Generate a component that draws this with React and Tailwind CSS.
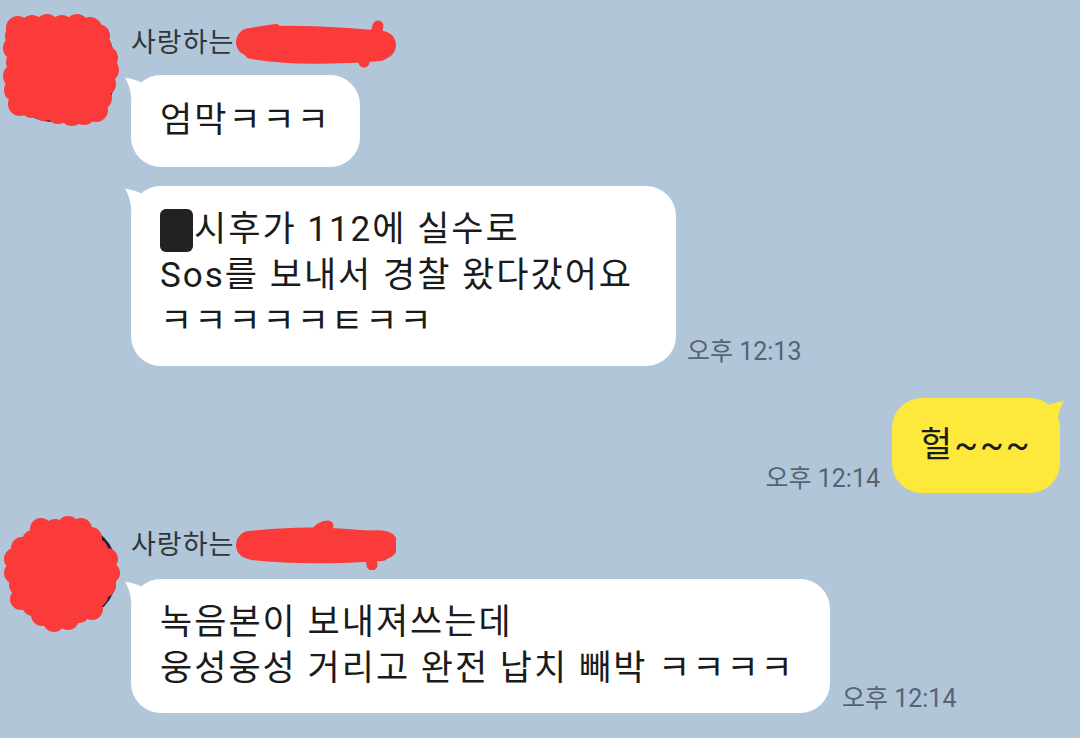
import React from "react";

const FONT = { fontFamily: "Roboto, 'Noto Sans CJK KR', 'Noto Sans', sans-serif" };

function Blob({ pts, r }) {
  const d = "M" + pts.map((p) => p.join(" ")).join(" L ") + " Z";
  return (
    <g fill="#fa3b3a">
      <path d={d} />
      {pts.map((p, i) => (
        <circle key={i} cx={p[0]} cy={p[1]} r={r} />
      ))}
    </g>
  );
}

function Avatar1() {
  const pts = [
    [16, 16], [30, 15], [45, 14], [60, 15], [75, 14], [88, 17], [96, 24], [98, 36], [104, 46],
    [105, 58], [102, 72], [98, 86], [94, 98], [82, 101], [70, 102], [56, 100], [42, 97],
    [30, 94], [18, 92], [14, 78], [13, 64], [16, 50], [13, 36], [15, 24],
  ];
  return (
    <svg width="120" height="120" viewBox="0 0 120 120" className="block">
      <rect x="10" y="6" width="102" height="104" rx="40" fill="#1c2230" />
      <path d="M100 70 Q108 80 104 96 L92 104 Z" fill="#c9cfd6" />
      <path d="M40 104 Q60 112 80 108 L70 100 Z" fill="#8a8f99" />
      <Blob pts={pts} r={12} />
    </svg>
  );
}

function Avatar2() {
  const pts = [];
  const n = 22;
  for (let i = 0; i < n; i++) {
    const a = (i / n) * Math.PI * 2;
    const rr = 45 + (i % 3 === 0 ? 3 : i % 2 === 0 ? -2 : 1);
    pts.push([Math.round(59 + Math.cos(a) * rr), Math.round(61 + Math.sin(a) * rr)]);
  }
  return (
    <svg width="120" height="120" viewBox="0 0 120 120" className="block">
      <rect x="24" y="14" width="90" height="92" rx="40" fill="#1c2230" />
      <Blob pts={pts} r={11} />
    </svg>
  );
}

function NameScribble({ variant }) {
  return (
    <svg width="160" height="50" viewBox="0 0 160 50" className="block -my-[7px] ml-[2px]">
      <g stroke="#fa3b3a" strokeLinecap="round" strokeLinejoin="round" fill="none">
        {variant === 1 ? (
          <>
            <path d="M14 24 C 40 20, 80 22, 110 24 S 140 26, 146 27" strokeWidth="28" />
            <path d="M16 32 C 50 38, 100 38, 144 34" strokeWidth="18" />
            <path d="M138 22 L 142 8" strokeWidth="11" />
            <path d="M124 32 L 128 44" strokeWidth="11" />
            <path d="M20 14 L 40 11" strokeWidth="10" />
          </>
        ) : (
          <>
            <path d="M14 25 C 40 22, 80 20, 110 23 S 140 23, 148 25" strokeWidth="28" />
            <path d="M16 32 C 50 36, 100 36, 146 33" strokeWidth="16" />
            <path d="M78 16 C 82 9, 86 6, 92 6" strokeWidth="11" />
            <path d="M134 30 L 136 45" strokeWidth="11" />
          </>
        )}
      </g>
    </svg>
  );
}

function LeftTail() {
  return (
    <svg width="22" height="32" viewBox="0 0 22 32" className="absolute -left-[7px] top-0">
      <path d="M1 2.5 C 7 3.5, 13 5, 21 9 L 21 32 L 8 32 C 7.5 18, 5 9, 1 2.5 Z" fill="#ffffff" />
    </svg>
  );
}

function RightTail() {
  return (
    <svg width="22" height="32" viewBox="0 0 22 32" className="absolute -right-[5px] top-0">
      <path d="M21 3 C 15 4, 9 5, 1 9 L 1 32 L 14 32 C 14.5 18, 17 9, 21 3 Z" fill="#fde93c" />
    </svg>
  );
}

function Time({ children }) {
  return (
    <div className="text-[25px] leading-[26px] text-[#566372] whitespace-nowrap mb-[1px]" style={FONT}>
      {children}
    </div>
  );
}

function LeftBubble({ children, w, py = "py-[21px]" }) {
  return (
    <div className={`relative bg-white rounded-[30px] ${py} pl-[29px] pr-[20px] ${w}`}>
      <LeftTail />
      <div className="relative text-[35px] leading-[46px] tracking-[2px] text-[#1b1b1b] whitespace-nowrap" style={FONT}>
        {children}
      </div>
    </div>
  );
}

function Name({ variant }) {
  return (
    <div className="flex items-center h-[36px]">
      <span className="text-[27px] leading-[36px] tracking-[1px] text-[#30353b] whitespace-nowrap" style={FONT}>
        사랑하는
      </span>
      <NameScribble variant={variant} />
    </div>
  );
}

export default function App() {
  return (
    <div className="w-[1080px] h-[738px] bg-[#b2c6d9] overflow-hidden flex flex-col">
      {/* group 1 */}
      <div className="flex pl-[2px] pt-[12px]">
        <div className="w-[120px] h-[120px] shrink-0">
          <Avatar1 />
        </div>
        <div className="ml-[9px] flex flex-col">
          <div className="mt-[13px]">
            <Name variant={1} />
          </div>
          <div className="mt-[14px]">
            <LeftBubble w="w-[229px]" py="py-[23px]">엄막ㅋㅋㅋ</LeftBubble>
          </div>
          <div className="mt-[19px] flex items-end gap-[11px]">
            <LeftBubble w="w-[545px]">
              <div className="flex items-center h-[46px]">
                <span className="inline-block w-[33px] h-[43px] bg-[#222] rounded-[6px] mr-[1px]" />
                <span>시후가 112에 실수로</span>
              </div>
              <div>Sos를 보내서 경찰 왔다갔어요</div>
              <div>ㅋㅋㅋㅋㅋㅌㅋㅋ</div>
            </LeftBubble>
            <Time>오후 12:13</Time>
          </div>
        </div>
      </div>

      {/* group 2: own */}
      <div className="mt-[32px] flex justify-end items-end gap-[12px] pr-[20px]">
        <Time>오후 12:14</Time>
        <div className="relative bg-[#fde93c] rounded-[30px] w-[168px] py-[24px] pl-[28px]">
          <RightTail />
          <div className="relative text-[35px] leading-[47px] tracking-[2px] text-[#1b1b1b] whitespace-nowrap" style={FONT}>
            헐~~~
          </div>
        </div>
      </div>

      {/* group 3 */}
      <div className="flex pl-[2px] mt-[19px]">
        <div className="w-[120px] h-[120px] shrink-0">
          <Avatar2 />
        </div>
        <div className="ml-[9px] flex flex-col">
          <div className="mt-[15px]">
            <Name variant={2} />
          </div>
          <div className="mt-[16px] flex items-end gap-[12px]">
            <LeftBubble w="w-[699px]">
              <div>녹음본이 보내져쓰는데</div>
              <div>웅성웅성 거리고 완전 납치 빼박 ㅋㅋㅋㅋ</div>
            </LeftBubble>
            <Time>오후 12:14</Time>
          </div>
        </div>
      </div>
    </div>
  );
}
